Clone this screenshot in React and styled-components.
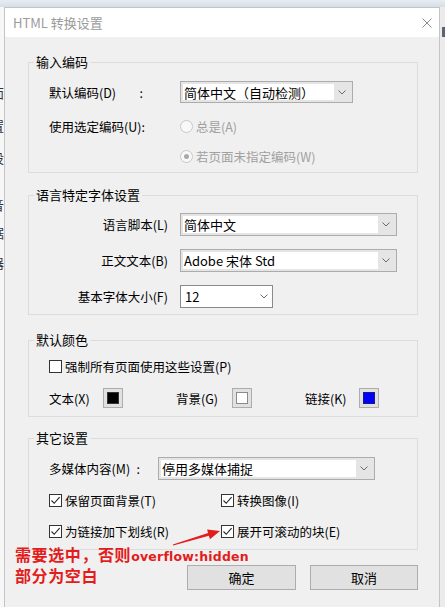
import React from "react";
import styled, { createGlobalStyle } from "styled-components";

const GlobalStyle = createGlobalStyle`
  html, body { margin: 0; padding: 0; }
  body {
    font-family: "Noto Sans CJK SC", "Microsoft YaHei", sans-serif;
    background: #eceff2;
  }
`;

const Desktop = styled.div`
  position: relative;
  width: 445px;
  height: 607px;
  overflow: hidden;
  display: flex;
  flex-direction: column;
  background: #eceff2;
`;

const TopStrip = styled.div`
  height: 7px;
  flex-shrink: 0;
  background: linear-gradient(#e7edf3, #d5dee7);
`;

const Middle = styled.div`
  flex: 1;
  display: flex;
  min-height: 0;
`;

const LeftStrip = styled.div`
  width: 4px;
  flex-shrink: 0;
  overflow: hidden;
  background: #f7f7f7;
  display: flex;
  flex-direction: column;
`;

const Fragment = styled.span`
  margin-top: ${(p) => p.$top}px;
  margin-left: -9px;
  font-size: 13px;
  line-height: 16px;
  color: #333;
  white-space: nowrap;
`;

const RightStrip = styled.div`
  flex: 1;
  background: #ebebeb;
  display: flex;
  flex-direction: column;
  align-items: flex-end;
`;

const RightMark = styled.div`
  margin-top: ${(p) => p.$top}px;
  width: 3px;
  height: ${(p) => p.$h}px;
  background: #5a6470;
`;

const Dialog = styled.div`
  width: 436px;
  flex-shrink: 0;
  box-sizing: border-box;
  border: 1px solid #c4c4c4;
  border-bottom: none;
  background: #f0f0f0;
  display: flex;
  flex-direction: column;
`;

const TitleBar = styled.div`
  height: 29px;
  flex-shrink: 0;
  background: #fff;
  display: flex;
  align-items: center;
  justify-content: space-between;
  padding: 0 7px 0 8px;
`;

const Title = styled.span`
  font-size: 13px;
  line-height: 16px;
  color: #9b9b9b;
`;

const Body = styled.div`
  display: flex;
  flex-direction: column;
  padding: 0 21px 0 23px;
`;

const Group = styled.fieldset`
  margin: ${(p) => p.$mt}px 0 0;
  padding: 0;
  min-width: 0;
  border: 1px solid #dcdcdc;
`;

const Legend = styled.legend`
  margin-left: 5px;
  padding: 0 2px;
  font-size: 13px;
  line-height: 16px;
  color: #000;
`;

const GroupInner = styled.div`
  display: flex;
  flex-direction: column;
  padding: 0 20px ${(p) => p.$pb}px;
`;

const Row = styled.div`
  display: flex;
  align-items: center;
  height: ${(p) => p.$h}px;
  margin-top: ${(p) => p.$mt}px;
  font-size: 12.5px;
  color: #000;
  white-space: nowrap;
`;

const FieldLabel = styled.span`
  width: ${(p) => p.$w}px;
  margin-right: ${(p) => p.$mr}px;
  flex-shrink: 0;
  display: flex;
  justify-content: space-between;
`;

const RightLabel = styled.span`
  width: 119px;
  margin-right: 12px;
  flex-shrink: 0;
  text-align: right;
`;

const Spacer = styled.span`
  width: ${(p) => p.$w}px;
  flex-shrink: 0;
`;

const Combo = styled.div`
  width: ${(p) => p.$w}px;
  height: ${(p) => p.$h}px;
  box-sizing: border-box;
  flex-shrink: 0;
  display: flex;
  border: 1px solid ${(p) => (p.$editable ? "#8a8a8a" : "#acacac")};
  background: ${(p) => (p.$editable ? "#fff" : "#e5e5e5")};
  padding: ${(p) => (p.$editable ? 0 : 2)}px;
`;

const ComboText = styled.div`
  flex: 1;
  display: flex;
  align-items: center;
  background: #fff;
  padding-left: ${(p) => (p.$editable ? 4 : 1)}px;
  font-size: 13px;
  overflow: hidden;
  white-space: nowrap;
`;

const ComboArrow = styled.div`
  width: 16px;
  display: flex;
  align-items: center;
  justify-content: center;
`;

const RadioDot = styled.span`
  width: 13px;
  height: 13px;
  box-sizing: border-box;
  flex-shrink: 0;
  margin-right: 3px;
  border-radius: 50%;
  border: 1px solid #c8c8c8;
  background: #f8f8f8;
  display: flex;
  align-items: center;
  justify-content: center;
  &::after {
    content: "";
    width: 5px;
    height: 5px;
    border-radius: 50%;
    background: ${(p) => (p.$checked ? "#a9a9a9" : "transparent")};
  }
`;

const DisabledText = styled.span`
  color: #a0a0a0;
`;

const CheckBox = styled.span`
  width: 13px;
  height: 13px;
  box-sizing: border-box;
  flex-shrink: 0;
  margin-right: 3px;
  border: 1px solid #333;
  background: #fff;
  display: flex;
`;

const CheckItem = styled.span`
  width: ${(p) => (p.$w ? `${p.$w}px` : "auto")};
  flex-shrink: 0;
  display: flex;
  align-items: center;
`;

const ColorItem = styled.span`
  width: ${(p) => (p.$w ? `${p.$w}px` : "auto")};
  flex-shrink: 0;
  display: flex;
  align-items: center;
`;

const ColorLabel = styled.span`
  width: ${(p) => p.$w}px;
  flex-shrink: 0;
`;

const Swatch = styled.span`
  width: 20px;
  height: 20px;
  box-sizing: border-box;
  border: 1px solid #adadad;
  background: #e1e1e1;
  padding: 3px;
  display: flex;
  &::after {
    content: "";
    flex: 1;
    background: ${(p) => p.$color};
    border: 1px solid ${(p) => p.$edge};
  }
`;

const ButtonRow = styled.div`
  display: flex;
  justify-content: flex-end;
  gap: 14px;
  margin-top: 15px;
`;

const Button = styled.button`
  width: ${(p) => p.$w}px;
  height: 25px;
  padding: 0;
  border: 1px solid #adadad;
  background: #e1e1e1;
  font-family: inherit;
  font-size: 13px;
  color: #000;
`;

const Note = styled.div`
  position: absolute;
  left: 15px;
  top: 545px;
  font-size: 16px;
  line-height: 18px;
  font-weight: 700;
  letter-spacing: 0.6px;
  color: #e31c1c;
  white-space: nowrap;
`;

const Latin = styled.span`
  font-family: "DejaVu Sans", sans-serif;
  font-size: 12.5px;
  letter-spacing: 0.2px;
`;

const NoteArrow = styled.svg`
  position: absolute;
  left: 168px;
  top: 524px;
`;

function Chevron() {
  return (
    <svg width="8" height="5" viewBox="0 0 8 5">
      <polyline points="0.5,0.5 4,4 7.5,0.5" fill="none" stroke="#6a6a6a" strokeWidth="1" />
    </svg>
  );
}

function Select({ w, h, editable, children }) {
  return (
    <Combo $w={w} $h={h} $editable={editable}>
      <ComboText $editable={editable}>{children}</ComboText>
      <ComboArrow>
        <Chevron />
      </ComboArrow>
    </Combo>
  );
}

function Check({ w, children }) {
  return (
    <CheckItem $w={w}>
      <CheckBox>
        <svg width="11" height="11" viewBox="0 0 11 11">
          <polyline points="1.5,5.5 4.2,8.3 9.6,2.2" fill="none" stroke="#222" strokeWidth="1.1" />
        </svg>
      </CheckBox>
      {children}
    </CheckItem>
  );
}

function App() {
  return (
    <>
      <GlobalStyle />
      <Desktop>
        <TopStrip />
        <Middle>
          <LeftStrip>
            <Fragment $top={78}>面</Fragment>
            <Fragment $top={17}>置</Fragment>
            <Fragment $top={16}>设</Fragment>
            <Fragment $top={31}>音</Fragment>
            <Fragment $top={12}>据</Fragment>
            <Fragment $top={14}>器</Fragment>
          </LeftStrip>
          <Dialog>
            <TitleBar>
              <Title>HTML 转换设置</Title>
              <svg width="10" height="10" viewBox="0 0 10 10">
                <path d="M0.5 0.5 L9.5 9.5 M9.5 0.5 L0.5 9.5" stroke="#8c8c8c" strokeWidth="1" />
              </svg>
            </TitleBar>
            <Body>
              <Group $mt={17}>
                <Legend>输入编码</Legend>
                <GroupInner $pb={6}>
                  <Row $h={22} $mt={11}>
                    <FieldLabel $w={94} $mr={37}>
                      <span>默认编码(D)</span>
                      <span>:</span>
                    </FieldLabel>
                    <Select w={173} h={22}>简体中文（自动检测）</Select>
                  </Row>
                  <Row $h={20} $mt={13}>
                    <FieldLabel $w={94} $mr={37}>
                      <span>使用选定编码(U)</span>
                      <span>:</span>
                    </FieldLabel>
                    <RadioDot />
                    <DisabledText>总是(A)</DisabledText>
                  </Row>
                  <Row $h={20} $mt={10}>
                    <Spacer $w={131} />
                    <RadioDot $checked />
                    <DisabledText>若页面未指定编码(W)</DisabledText>
                  </Row>
                </GroupInner>
              </Group>

              <Group $mt={14}>
                <Legend>语言特定字体设置</Legend>
                <GroupInner $pb={6}>
                  <Row $h={23} $mt={10}>
                    <RightLabel>语言脚本(L)</RightLabel>
                    <Select w={217} h={23}>简体中文</Select>
                  </Row>
                  <Row $h={23} $mt={13}>
                    <RightLabel>正文文本(B)</RightLabel>
                    <Select w={217} h={23}>Adobe 宋体 Std</Select>
                  </Row>
                  <Row $h={23} $mt={13}>
                    <RightLabel>基本字体大小(F)</RightLabel>
                    <Select w={93} h={23} editable>12</Select>
                  </Row>
                </GroupInner>
              </Group>

              <Group $mt={17}>
                <Legend>默认颜色</Legend>
                <GroupInner $pb={8}>
                  <Row $h={16} $mt={10}>
                    <CheckItem>
                      <CheckBox />
                      强制所有页面使用这些设置(P)
                    </CheckItem>
                  </Row>
                  <Row $h={20} $mt={14}>
                    <ColorItem $w={127}>
                      <ColorLabel $w={54}>文本(X)</ColorLabel>
                      <Swatch $color="#000" $edge="#333" />
                    </ColorItem>
                    <ColorItem $w={129}>
                      <ColorLabel $w={56}>背景(G)</ColorLabel>
                      <Swatch $color="#fff" $edge="#8a8a8a" />
                    </ColorItem>
                    <ColorItem>
                      <ColorLabel $w={54}>链接(K)</ColorLabel>
                      <Swatch $color="#0000ff" $edge="#1a1a80" />
                    </ColorItem>
                  </Row>
                </GroupInner>
              </Group>

              <Group $mt={13}>
                <Legend>其它设置</Legend>
                <GroupInner $pb={10}>
                  <Row $h={23} $mt={11}>
                    <FieldLabel $w={91} $mr={18}>
                      <span>多媒体内容(M)</span>
                      <span>:</span>
                    </FieldLabel>
                    <Select w={217} h={23}>停用多媒体捕捉</Select>
                  </Row>
                  <Row $h={16} $mt={12}>
                    <Check w={172}>保留页面背景(T)</Check>
                    <Check>转换图像(I)</Check>
                  </Row>
                  <Row $h={16} $mt={15}>
                    <Check w={172}>为链接加下划线(R)</Check>
                    <Check>展开可滚动的块(E)</Check>
                  </Row>
                </GroupInner>
              </Group>

              <ButtonRow>
                <Button $w={109}>确定</Button>
                <Button $w={108}>取消</Button>
              </ButtonRow>
            </Body>
          </Dialog>
          <RightStrip>
            <RightMark $top={20} $h={10} />
          </RightStrip>
        </Middle>

        <Note>
          <div>
            需要选中，否则<Latin>overflow:hidden</Latin>
          </div>
          <div>部分为空白</div>
        </Note>
        <NoteArrow width="56" height="26" viewBox="0 0 56 26">
          <polygon
            points="4.86,20.52 40.07,8.99 39.1,5.6 52,7 41.9,15.2 40.9,11.87 5.14,21.48"
            fill="#e31c1c"
          />
        </NoteArrow>
      </Desktop>
    </>
  );
}

export default App;
